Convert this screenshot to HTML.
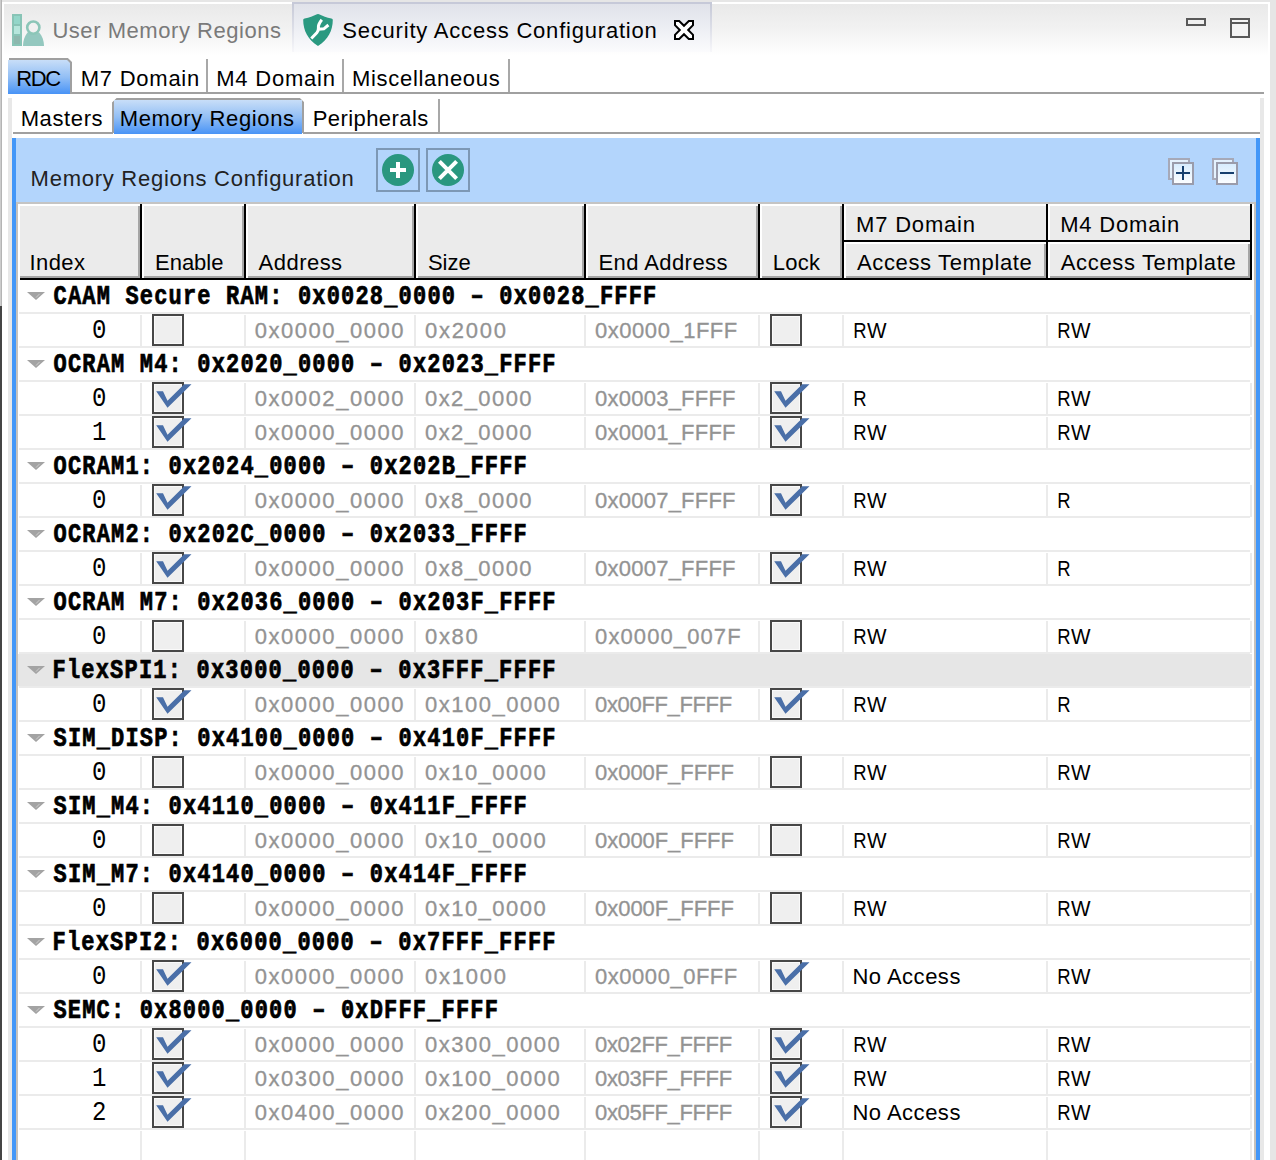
<!DOCTYPE html><html><head><meta charset="utf-8"><style>
html,body{margin:0;padding:0;width:1276px;height:1160px;overflow:hidden;background:#fff}
body>div,body>svg{position:absolute}
</style></head><body>
<div style="left:0px;top:0px;width:1276px;height:2px;background:#e6e6e6"></div>
<div style="left:1270px;top:0px;width:6px;height:1160px;background:#e6e6e6"></div>
<div style="left:0px;top:0px;width:2px;height:306px;background:linear-gradient(90deg,#d8d8d8,#a8a8a8)"></div>
<div style="left:0px;top:306px;width:2px;height:854px;background:#444"></div>
<div style="left:4px;top:4px;width:1264px;height:52px;background:linear-gradient(#e9e9e9,#f2f2f2 50%,#fff)"></div>
<div style="left:292px;top:2px;width:420px;height:50px;background:linear-gradient(#dfe1e9,#eceef3 50%,#fbfbfd)"></div>
<div style="left:292px;top:2px;width:420px;height:2px;background:#c6c9d8"></div>
<div style="left:292px;top:4px;width:2px;height:48px;background:linear-gradient(#c6c9d7,#dcdee7 50%,#f7f7fa)"></div>
<div style="left:710px;top:4px;width:2px;height:48px;background:linear-gradient(#c6c9d7,#dcdee7 50%,#f7f7fa)"></div>
<svg style="left:0;top:0" width="60" height="56"><rect x="12" y="14" width="10" height="32" fill="#88c4b6"/><rect x="14" y="16" width="6" height="8" fill="#93d6c9"/><rect x="14" y="26" width="6" height="8" fill="#b6e6dc"/><rect x="14" y="36" width="6" height="8" fill="#8db8ae"/><path d="M27.5 32.4 C24.5 36 23 41 23 46 H44 C44 41 42.5 36 39.2 32.4 Z" fill="#94c8bf"/><circle cx="33.3" cy="27.6" r="6.1" fill="#f1f1f1" stroke="#8cc6b8" stroke-width="2.6"/></svg>
<svg style="left:296px;top:8px" width="44" height="44"><path d="M7.2 11.8 Q7.3 10.6 8.6 10.4 C13.5 9.6 17 8 21 6.2 Q22 5.7 23 6.2 C27 8 30.5 9.6 35.4 10.4 Q36.7 10.6 36.8 11.8 C36.8 22.5 32 32 22 37.9 C12 32 7.2 22.5 7.2 11.8 Z" fill="#2a9980"/><path d="M15.3 30.5 L20.8 24.8 Q22.6 22.8 22.4 20 Q22 16.5 25.8 11.8 M22.5 21.3 L27.8 20.8 L32.4 17" fill="none" stroke="#fff" stroke-width="3"/></svg>
<svg style="left:668px;top:14px" width="32" height="32"><path d="M7 7 H11.2 L16 11.8 L20.8 7 H25 V11.2 L20.2 16 L25 20.8 V25 H20.8 L16 20.2 L11.2 25 H7 V20.8 L11.8 16 L7 11.2 Z" fill="#fff" stroke="#000" stroke-width="2" stroke-linejoin="miter"/></svg>
<div style="left:1186px;top:18px;width:20px;height:8px;border:2px solid #595959;box-sizing:border-box;background:#f0f0f0"></div>
<div style="left:1230px;top:18px;width:20px;height:20px;border:2px solid #595959;box-sizing:border-box;background:#f4f4f4"></div>
<div style="left:1232px;top:22px;width:16px;height:2px;background:#595959"></div>
<div style="left:8px;top:60px;width:62px;height:34px;background:linear-gradient(#c8def8,#93bff5 50%,#4893f6)"></div>
<svg style="left:0;top:0" width="1276" height="140"><path d="M9 59 H67.5 L71 62.5 V93" fill="none" stroke="#a0a0a0" stroke-width="2"/><path d="M113 133 V103 L117 99 H299.5 L303 102.5 V133" fill="none" stroke="#a0a0a0" stroke-width="2"/></svg>
<div style="left:70px;top:92px;width:1194px;height:2px;background:#a0a0a0"></div>
<div style="left:206px;top:59px;width:2px;height:33px;background:#a8a8a8"></div>
<div style="left:342px;top:59px;width:2px;height:33px;background:#a8a8a8"></div>
<div style="left:508px;top:59px;width:2px;height:33px;background:#a8a8a8"></div>
<div style="left:8px;top:98px;width:4px;height:1062px;background:#e8e8e8"></div>
<div style="left:1260px;top:98px;width:4px;height:1062px;background:#e8e8e8"></div>
<div style="left:114px;top:100px;width:188px;height:34px;background:linear-gradient(#c8def8,#93bff5 50%,#4893f6)"></div>
<div style="left:13px;top:132px;width:100px;height:2px;background:#a0a0a0"></div>
<div style="left:303px;top:132px;width:957px;height:2px;background:#a0a0a0"></div>
<div style="left:438px;top:99px;width:2px;height:33px;background:#a8a8a8"></div>
<div style="left:12px;top:138px;width:1248px;height:1022px;background:#b3d5fc"></div>
<div style="left:12px;top:138px;width:4px;height:1022px;background:#4397f8"></div>
<div style="left:1256px;top:138px;width:4px;height:1022px;background:#4397f8"></div>
<svg style="left:376px;top:148px" width="44" height="44"><rect x="1" y="1" width="42" height="42" fill="none" stroke="#7d98b5" stroke-width="2"/><circle cx="22" cy="22" r="16" fill="#2a977f"/><rect x="14" y="20" width="16" height="4" fill="#fff"/><rect x="20" y="14" width="4" height="16" fill="#fff"/></svg>
<svg style="left:426px;top:148px" width="44" height="44"><rect x="1" y="1" width="42" height="42" fill="none" stroke="#7d98b5" stroke-width="2"/><circle cx="22" cy="22" r="16" fill="#2a977f"/><path d="M13.4 13.4 L30.6 30.6 M30.6 13.4 L13.4 30.6" stroke="#fff" stroke-width="4"/></svg>
<svg style="left:1168px;top:157px" width="28" height="28"><rect x="1" y="2" width="20" height="20" fill="#e4f2fe" stroke="#a6a9b8" stroke-width="2"/><defs><linearGradient id="g+" x1="0" y1="0" x2="0" y2="1"><stop offset="0" stop-color="#d6ecfe"/><stop offset="1" stop-color="#fdfeff"/></linearGradient></defs><rect x="5" y="6" width="20" height="21" fill="url(#g+)" stroke="#9a9cab" stroke-width="2"/><path d="M8 16 H22 M15 9 V23" stroke="#163f6e" stroke-width="2"/></svg>
<svg style="left:1212px;top:157px" width="28" height="28"><rect x="1" y="2" width="20" height="20" fill="#e4f2fe" stroke="#a6a9b8" stroke-width="2"/><defs><linearGradient id="g-" x1="0" y1="0" x2="0" y2="1"><stop offset="0" stop-color="#d6ecfe"/><stop offset="1" stop-color="#fdfeff"/></linearGradient></defs><rect x="5" y="6" width="20" height="21" fill="url(#g-)" stroke="#9a9cab" stroke-width="2"/><path d="M8 16 H22" stroke="#163f6e" stroke-width="2"/></svg>
<div style="left:16px;top:202px;width:1240px;height:958px;background:#fff"></div>
<div style="left:16px;top:202px;width:1240px;height:2px;background:#c4c4c4"></div>
<div style="left:16px;top:202px;width:2px;height:958px;background:#c6c2bd"></div>
<div style="left:1254px;top:202px;width:2px;height:958px;background:#c6c2bd"></div>
<div style="left:18px;top:204px;width:124px;height:76px;background:#000"></div>
<div style="left:18px;top:204px;width:122px;height:74px;background:#fff"></div>
<div style="left:20px;top:206px;width:120px;height:72px;background:#a5a5a5"></div>
<div style="left:20px;top:206px;width:118px;height:70px;background:#ebebeb"></div>
<div style="left:142px;top:204px;width:104px;height:76px;background:#000"></div>
<div style="left:142px;top:204px;width:102px;height:74px;background:#fff"></div>
<div style="left:144px;top:206px;width:100px;height:72px;background:#a5a5a5"></div>
<div style="left:144px;top:206px;width:98px;height:70px;background:#ebebeb"></div>
<div style="left:246px;top:204px;width:170px;height:76px;background:#000"></div>
<div style="left:246px;top:204px;width:168px;height:74px;background:#fff"></div>
<div style="left:248px;top:206px;width:166px;height:72px;background:#a5a5a5"></div>
<div style="left:248px;top:206px;width:164px;height:70px;background:#ebebeb"></div>
<div style="left:416px;top:204px;width:170px;height:76px;background:#000"></div>
<div style="left:416px;top:204px;width:168px;height:74px;background:#fff"></div>
<div style="left:418px;top:206px;width:166px;height:72px;background:#a5a5a5"></div>
<div style="left:418px;top:206px;width:164px;height:70px;background:#ebebeb"></div>
<div style="left:586px;top:204px;width:174px;height:76px;background:#000"></div>
<div style="left:586px;top:204px;width:172px;height:74px;background:#fff"></div>
<div style="left:588px;top:206px;width:170px;height:72px;background:#a5a5a5"></div>
<div style="left:588px;top:206px;width:168px;height:70px;background:#ebebeb"></div>
<div style="left:760px;top:204px;width:84px;height:76px;background:#000"></div>
<div style="left:760px;top:204px;width:82px;height:74px;background:#fff"></div>
<div style="left:762px;top:206px;width:80px;height:72px;background:#a5a5a5"></div>
<div style="left:762px;top:206px;width:78px;height:70px;background:#ebebeb"></div>
<div style="left:18px;top:204px;width:2px;height:76px;background:#fff"></div>
<div style="left:844px;top:204px;width:204px;height:38px;background:#000"></div>
<div style="left:844px;top:204px;width:202px;height:36px;background:#fff"></div>
<div style="left:846px;top:206px;width:200px;height:34px;background:#ebebeb"></div>
<div style="left:844px;top:242px;width:204px;height:38px;background:#000"></div>
<div style="left:844px;top:242px;width:202px;height:36px;background:#fff"></div>
<div style="left:846px;top:244px;width:200px;height:34px;background:#a5a5a5"></div>
<div style="left:846px;top:244px;width:198px;height:32px;background:#ebebeb"></div>
<div style="left:1048px;top:204px;width:204px;height:38px;background:#000"></div>
<div style="left:1048px;top:204px;width:202px;height:36px;background:#fff"></div>
<div style="left:1050px;top:206px;width:200px;height:34px;background:#ebebeb"></div>
<div style="left:1048px;top:242px;width:204px;height:38px;background:#000"></div>
<div style="left:1048px;top:242px;width:202px;height:36px;background:#fff"></div>
<div style="left:1050px;top:244px;width:200px;height:34px;background:#a5a5a5"></div>
<div style="left:1050px;top:244px;width:198px;height:32px;background:#ebebeb"></div>
<svg style="left:27px;top:292px" width="18" height="8"><path d="M0 0 H18 L9 8 Z" fill="#a3a3a3"/><path d="M9 5.6 L12.6 1.9" stroke="#d8d8d8" stroke-width="0.8"/></svg>
<div style="left:19px;top:312px;width:1231px;height:2px;background:#ebebeb"></div>
<div style="left:140px;top:315px;width:2px;height:32px;background:#ebebeb"></div>
<div style="left:244px;top:315px;width:2px;height:32px;background:#ebebeb"></div>
<div style="left:414px;top:315px;width:2px;height:32px;background:#ebebeb"></div>
<div style="left:584px;top:315px;width:2px;height:32px;background:#ebebeb"></div>
<div style="left:758px;top:315px;width:2px;height:32px;background:#ebebeb"></div>
<div style="left:842px;top:315px;width:2px;height:32px;background:#ebebeb"></div>
<div style="left:1046px;top:315px;width:2px;height:32px;background:#ebebeb"></div>
<div style="left:1250px;top:315px;width:2px;height:32px;background:#ebebeb"></div>
<svg style="left:152px;top:314px" width="40" height="32"><rect x="1" y="1" width="30" height="30" fill="#efefef" stroke="#474747" stroke-width="2"/><rect x="2.5" y="2.5" width="27" height="27" fill="none" stroke="#fafafa" stroke-width="1"/></svg>
<svg style="left:770px;top:314px" width="40" height="32"><rect x="1" y="1" width="30" height="30" fill="#efefef" stroke="#474747" stroke-width="2"/><rect x="2.5" y="2.5" width="27" height="27" fill="none" stroke="#fafafa" stroke-width="1"/></svg>
<div style="left:19px;top:346px;width:1231px;height:2px;background:#ebebeb"></div>
<svg style="left:27px;top:360px" width="18" height="8"><path d="M0 0 H18 L9 8 Z" fill="#a3a3a3"/><path d="M9 5.6 L12.6 1.9" stroke="#d8d8d8" stroke-width="0.8"/></svg>
<div style="left:19px;top:380px;width:1231px;height:2px;background:#ebebeb"></div>
<div style="left:140px;top:383px;width:2px;height:32px;background:#ebebeb"></div>
<div style="left:244px;top:383px;width:2px;height:32px;background:#ebebeb"></div>
<div style="left:414px;top:383px;width:2px;height:32px;background:#ebebeb"></div>
<div style="left:584px;top:383px;width:2px;height:32px;background:#ebebeb"></div>
<div style="left:758px;top:383px;width:2px;height:32px;background:#ebebeb"></div>
<div style="left:842px;top:383px;width:2px;height:32px;background:#ebebeb"></div>
<div style="left:1046px;top:383px;width:2px;height:32px;background:#ebebeb"></div>
<div style="left:1250px;top:383px;width:2px;height:32px;background:#ebebeb"></div>
<svg style="left:152px;top:382px" width="40" height="32"><rect x="1" y="1" width="30" height="30" fill="#efefef" stroke="#474747" stroke-width="2"/><rect x="2.5" y="2.5" width="27" height="27" fill="none" stroke="#fafafa" stroke-width="1"/><path d="M4.2 9.3 H11 L15.5 18.7 L32.2 2.2 H39.5 L15.5 25.8 Z" fill="#4a6fa8"/></svg>
<svg style="left:770px;top:382px" width="40" height="32"><rect x="1" y="1" width="30" height="30" fill="#efefef" stroke="#474747" stroke-width="2"/><rect x="2.5" y="2.5" width="27" height="27" fill="none" stroke="#fafafa" stroke-width="1"/><path d="M4.2 9.3 H11 L15.5 18.7 L32.2 2.2 H39.5 L15.5 25.8 Z" fill="#4a6fa8"/></svg>
<div style="left:19px;top:414px;width:1231px;height:2px;background:#ebebeb"></div>
<div style="left:140px;top:417px;width:2px;height:32px;background:#ebebeb"></div>
<div style="left:244px;top:417px;width:2px;height:32px;background:#ebebeb"></div>
<div style="left:414px;top:417px;width:2px;height:32px;background:#ebebeb"></div>
<div style="left:584px;top:417px;width:2px;height:32px;background:#ebebeb"></div>
<div style="left:758px;top:417px;width:2px;height:32px;background:#ebebeb"></div>
<div style="left:842px;top:417px;width:2px;height:32px;background:#ebebeb"></div>
<div style="left:1046px;top:417px;width:2px;height:32px;background:#ebebeb"></div>
<div style="left:1250px;top:417px;width:2px;height:32px;background:#ebebeb"></div>
<svg style="left:152px;top:416px" width="40" height="32"><rect x="1" y="1" width="30" height="30" fill="#efefef" stroke="#474747" stroke-width="2"/><rect x="2.5" y="2.5" width="27" height="27" fill="none" stroke="#fafafa" stroke-width="1"/><path d="M4.2 9.3 H11 L15.5 18.7 L32.2 2.2 H39.5 L15.5 25.8 Z" fill="#4a6fa8"/></svg>
<svg style="left:770px;top:416px" width="40" height="32"><rect x="1" y="1" width="30" height="30" fill="#efefef" stroke="#474747" stroke-width="2"/><rect x="2.5" y="2.5" width="27" height="27" fill="none" stroke="#fafafa" stroke-width="1"/><path d="M4.2 9.3 H11 L15.5 18.7 L32.2 2.2 H39.5 L15.5 25.8 Z" fill="#4a6fa8"/></svg>
<div style="left:19px;top:448px;width:1231px;height:2px;background:#ebebeb"></div>
<svg style="left:27px;top:462px" width="18" height="8"><path d="M0 0 H18 L9 8 Z" fill="#a3a3a3"/><path d="M9 5.6 L12.6 1.9" stroke="#d8d8d8" stroke-width="0.8"/></svg>
<div style="left:19px;top:482px;width:1231px;height:2px;background:#ebebeb"></div>
<div style="left:140px;top:485px;width:2px;height:32px;background:#ebebeb"></div>
<div style="left:244px;top:485px;width:2px;height:32px;background:#ebebeb"></div>
<div style="left:414px;top:485px;width:2px;height:32px;background:#ebebeb"></div>
<div style="left:584px;top:485px;width:2px;height:32px;background:#ebebeb"></div>
<div style="left:758px;top:485px;width:2px;height:32px;background:#ebebeb"></div>
<div style="left:842px;top:485px;width:2px;height:32px;background:#ebebeb"></div>
<div style="left:1046px;top:485px;width:2px;height:32px;background:#ebebeb"></div>
<div style="left:1250px;top:485px;width:2px;height:32px;background:#ebebeb"></div>
<svg style="left:152px;top:484px" width="40" height="32"><rect x="1" y="1" width="30" height="30" fill="#efefef" stroke="#474747" stroke-width="2"/><rect x="2.5" y="2.5" width="27" height="27" fill="none" stroke="#fafafa" stroke-width="1"/><path d="M4.2 9.3 H11 L15.5 18.7 L32.2 2.2 H39.5 L15.5 25.8 Z" fill="#4a6fa8"/></svg>
<svg style="left:770px;top:484px" width="40" height="32"><rect x="1" y="1" width="30" height="30" fill="#efefef" stroke="#474747" stroke-width="2"/><rect x="2.5" y="2.5" width="27" height="27" fill="none" stroke="#fafafa" stroke-width="1"/><path d="M4.2 9.3 H11 L15.5 18.7 L32.2 2.2 H39.5 L15.5 25.8 Z" fill="#4a6fa8"/></svg>
<div style="left:19px;top:516px;width:1231px;height:2px;background:#ebebeb"></div>
<svg style="left:27px;top:530px" width="18" height="8"><path d="M0 0 H18 L9 8 Z" fill="#a3a3a3"/><path d="M9 5.6 L12.6 1.9" stroke="#d8d8d8" stroke-width="0.8"/></svg>
<div style="left:19px;top:550px;width:1231px;height:2px;background:#ebebeb"></div>
<div style="left:140px;top:553px;width:2px;height:32px;background:#ebebeb"></div>
<div style="left:244px;top:553px;width:2px;height:32px;background:#ebebeb"></div>
<div style="left:414px;top:553px;width:2px;height:32px;background:#ebebeb"></div>
<div style="left:584px;top:553px;width:2px;height:32px;background:#ebebeb"></div>
<div style="left:758px;top:553px;width:2px;height:32px;background:#ebebeb"></div>
<div style="left:842px;top:553px;width:2px;height:32px;background:#ebebeb"></div>
<div style="left:1046px;top:553px;width:2px;height:32px;background:#ebebeb"></div>
<div style="left:1250px;top:553px;width:2px;height:32px;background:#ebebeb"></div>
<svg style="left:152px;top:552px" width="40" height="32"><rect x="1" y="1" width="30" height="30" fill="#efefef" stroke="#474747" stroke-width="2"/><rect x="2.5" y="2.5" width="27" height="27" fill="none" stroke="#fafafa" stroke-width="1"/><path d="M4.2 9.3 H11 L15.5 18.7 L32.2 2.2 H39.5 L15.5 25.8 Z" fill="#4a6fa8"/></svg>
<svg style="left:770px;top:552px" width="40" height="32"><rect x="1" y="1" width="30" height="30" fill="#efefef" stroke="#474747" stroke-width="2"/><rect x="2.5" y="2.5" width="27" height="27" fill="none" stroke="#fafafa" stroke-width="1"/><path d="M4.2 9.3 H11 L15.5 18.7 L32.2 2.2 H39.5 L15.5 25.8 Z" fill="#4a6fa8"/></svg>
<div style="left:19px;top:584px;width:1231px;height:2px;background:#ebebeb"></div>
<svg style="left:27px;top:598px" width="18" height="8"><path d="M0 0 H18 L9 8 Z" fill="#a3a3a3"/><path d="M9 5.6 L12.6 1.9" stroke="#d8d8d8" stroke-width="0.8"/></svg>
<div style="left:19px;top:618px;width:1231px;height:2px;background:#ebebeb"></div>
<div style="left:140px;top:621px;width:2px;height:32px;background:#ebebeb"></div>
<div style="left:244px;top:621px;width:2px;height:32px;background:#ebebeb"></div>
<div style="left:414px;top:621px;width:2px;height:32px;background:#ebebeb"></div>
<div style="left:584px;top:621px;width:2px;height:32px;background:#ebebeb"></div>
<div style="left:758px;top:621px;width:2px;height:32px;background:#ebebeb"></div>
<div style="left:842px;top:621px;width:2px;height:32px;background:#ebebeb"></div>
<div style="left:1046px;top:621px;width:2px;height:32px;background:#ebebeb"></div>
<div style="left:1250px;top:621px;width:2px;height:32px;background:#ebebeb"></div>
<svg style="left:152px;top:620px" width="40" height="32"><rect x="1" y="1" width="30" height="30" fill="#efefef" stroke="#474747" stroke-width="2"/><rect x="2.5" y="2.5" width="27" height="27" fill="none" stroke="#fafafa" stroke-width="1"/></svg>
<svg style="left:770px;top:620px" width="40" height="32"><rect x="1" y="1" width="30" height="30" fill="#efefef" stroke="#474747" stroke-width="2"/><rect x="2.5" y="2.5" width="27" height="27" fill="none" stroke="#fafafa" stroke-width="1"/></svg>
<div style="left:19px;top:652px;width:1231px;height:2px;background:#ebebeb"></div>
<div style="left:18px;top:654px;width:1234px;height:32px;background:#e6e6e6"></div>
<svg style="left:27px;top:666px" width="18" height="8"><path d="M0 0 H18 L9 8 Z" fill="#a3a3a3"/><path d="M9 5.6 L12.6 1.9" stroke="#d8d8d8" stroke-width="0.8"/></svg>
<div style="left:19px;top:686px;width:1231px;height:2px;background:#ebebeb"></div>
<div style="left:140px;top:689px;width:2px;height:32px;background:#ebebeb"></div>
<div style="left:244px;top:689px;width:2px;height:32px;background:#ebebeb"></div>
<div style="left:414px;top:689px;width:2px;height:32px;background:#ebebeb"></div>
<div style="left:584px;top:689px;width:2px;height:32px;background:#ebebeb"></div>
<div style="left:758px;top:689px;width:2px;height:32px;background:#ebebeb"></div>
<div style="left:842px;top:689px;width:2px;height:32px;background:#ebebeb"></div>
<div style="left:1046px;top:689px;width:2px;height:32px;background:#ebebeb"></div>
<div style="left:1250px;top:689px;width:2px;height:32px;background:#ebebeb"></div>
<svg style="left:152px;top:688px" width="40" height="32"><rect x="1" y="1" width="30" height="30" fill="#efefef" stroke="#474747" stroke-width="2"/><rect x="2.5" y="2.5" width="27" height="27" fill="none" stroke="#fafafa" stroke-width="1"/><path d="M4.2 9.3 H11 L15.5 18.7 L32.2 2.2 H39.5 L15.5 25.8 Z" fill="#4a6fa8"/></svg>
<svg style="left:770px;top:688px" width="40" height="32"><rect x="1" y="1" width="30" height="30" fill="#efefef" stroke="#474747" stroke-width="2"/><rect x="2.5" y="2.5" width="27" height="27" fill="none" stroke="#fafafa" stroke-width="1"/><path d="M4.2 9.3 H11 L15.5 18.7 L32.2 2.2 H39.5 L15.5 25.8 Z" fill="#4a6fa8"/></svg>
<div style="left:19px;top:720px;width:1231px;height:2px;background:#ebebeb"></div>
<svg style="left:27px;top:734px" width="18" height="8"><path d="M0 0 H18 L9 8 Z" fill="#a3a3a3"/><path d="M9 5.6 L12.6 1.9" stroke="#d8d8d8" stroke-width="0.8"/></svg>
<div style="left:19px;top:754px;width:1231px;height:2px;background:#ebebeb"></div>
<div style="left:140px;top:757px;width:2px;height:32px;background:#ebebeb"></div>
<div style="left:244px;top:757px;width:2px;height:32px;background:#ebebeb"></div>
<div style="left:414px;top:757px;width:2px;height:32px;background:#ebebeb"></div>
<div style="left:584px;top:757px;width:2px;height:32px;background:#ebebeb"></div>
<div style="left:758px;top:757px;width:2px;height:32px;background:#ebebeb"></div>
<div style="left:842px;top:757px;width:2px;height:32px;background:#ebebeb"></div>
<div style="left:1046px;top:757px;width:2px;height:32px;background:#ebebeb"></div>
<div style="left:1250px;top:757px;width:2px;height:32px;background:#ebebeb"></div>
<svg style="left:152px;top:756px" width="40" height="32"><rect x="1" y="1" width="30" height="30" fill="#efefef" stroke="#474747" stroke-width="2"/><rect x="2.5" y="2.5" width="27" height="27" fill="none" stroke="#fafafa" stroke-width="1"/></svg>
<svg style="left:770px;top:756px" width="40" height="32"><rect x="1" y="1" width="30" height="30" fill="#efefef" stroke="#474747" stroke-width="2"/><rect x="2.5" y="2.5" width="27" height="27" fill="none" stroke="#fafafa" stroke-width="1"/></svg>
<div style="left:19px;top:788px;width:1231px;height:2px;background:#ebebeb"></div>
<svg style="left:27px;top:802px" width="18" height="8"><path d="M0 0 H18 L9 8 Z" fill="#a3a3a3"/><path d="M9 5.6 L12.6 1.9" stroke="#d8d8d8" stroke-width="0.8"/></svg>
<div style="left:19px;top:822px;width:1231px;height:2px;background:#ebebeb"></div>
<div style="left:140px;top:825px;width:2px;height:32px;background:#ebebeb"></div>
<div style="left:244px;top:825px;width:2px;height:32px;background:#ebebeb"></div>
<div style="left:414px;top:825px;width:2px;height:32px;background:#ebebeb"></div>
<div style="left:584px;top:825px;width:2px;height:32px;background:#ebebeb"></div>
<div style="left:758px;top:825px;width:2px;height:32px;background:#ebebeb"></div>
<div style="left:842px;top:825px;width:2px;height:32px;background:#ebebeb"></div>
<div style="left:1046px;top:825px;width:2px;height:32px;background:#ebebeb"></div>
<div style="left:1250px;top:825px;width:2px;height:32px;background:#ebebeb"></div>
<svg style="left:152px;top:824px" width="40" height="32"><rect x="1" y="1" width="30" height="30" fill="#efefef" stroke="#474747" stroke-width="2"/><rect x="2.5" y="2.5" width="27" height="27" fill="none" stroke="#fafafa" stroke-width="1"/></svg>
<svg style="left:770px;top:824px" width="40" height="32"><rect x="1" y="1" width="30" height="30" fill="#efefef" stroke="#474747" stroke-width="2"/><rect x="2.5" y="2.5" width="27" height="27" fill="none" stroke="#fafafa" stroke-width="1"/></svg>
<div style="left:19px;top:856px;width:1231px;height:2px;background:#ebebeb"></div>
<svg style="left:27px;top:870px" width="18" height="8"><path d="M0 0 H18 L9 8 Z" fill="#a3a3a3"/><path d="M9 5.6 L12.6 1.9" stroke="#d8d8d8" stroke-width="0.8"/></svg>
<div style="left:19px;top:890px;width:1231px;height:2px;background:#ebebeb"></div>
<div style="left:140px;top:893px;width:2px;height:32px;background:#ebebeb"></div>
<div style="left:244px;top:893px;width:2px;height:32px;background:#ebebeb"></div>
<div style="left:414px;top:893px;width:2px;height:32px;background:#ebebeb"></div>
<div style="left:584px;top:893px;width:2px;height:32px;background:#ebebeb"></div>
<div style="left:758px;top:893px;width:2px;height:32px;background:#ebebeb"></div>
<div style="left:842px;top:893px;width:2px;height:32px;background:#ebebeb"></div>
<div style="left:1046px;top:893px;width:2px;height:32px;background:#ebebeb"></div>
<div style="left:1250px;top:893px;width:2px;height:32px;background:#ebebeb"></div>
<svg style="left:152px;top:892px" width="40" height="32"><rect x="1" y="1" width="30" height="30" fill="#efefef" stroke="#474747" stroke-width="2"/><rect x="2.5" y="2.5" width="27" height="27" fill="none" stroke="#fafafa" stroke-width="1"/></svg>
<svg style="left:770px;top:892px" width="40" height="32"><rect x="1" y="1" width="30" height="30" fill="#efefef" stroke="#474747" stroke-width="2"/><rect x="2.5" y="2.5" width="27" height="27" fill="none" stroke="#fafafa" stroke-width="1"/></svg>
<div style="left:19px;top:924px;width:1231px;height:2px;background:#ebebeb"></div>
<svg style="left:27px;top:938px" width="18" height="8"><path d="M0 0 H18 L9 8 Z" fill="#a3a3a3"/><path d="M9 5.6 L12.6 1.9" stroke="#d8d8d8" stroke-width="0.8"/></svg>
<div style="left:19px;top:958px;width:1231px;height:2px;background:#ebebeb"></div>
<div style="left:140px;top:961px;width:2px;height:32px;background:#ebebeb"></div>
<div style="left:244px;top:961px;width:2px;height:32px;background:#ebebeb"></div>
<div style="left:414px;top:961px;width:2px;height:32px;background:#ebebeb"></div>
<div style="left:584px;top:961px;width:2px;height:32px;background:#ebebeb"></div>
<div style="left:758px;top:961px;width:2px;height:32px;background:#ebebeb"></div>
<div style="left:842px;top:961px;width:2px;height:32px;background:#ebebeb"></div>
<div style="left:1046px;top:961px;width:2px;height:32px;background:#ebebeb"></div>
<div style="left:1250px;top:961px;width:2px;height:32px;background:#ebebeb"></div>
<svg style="left:152px;top:960px" width="40" height="32"><rect x="1" y="1" width="30" height="30" fill="#efefef" stroke="#474747" stroke-width="2"/><rect x="2.5" y="2.5" width="27" height="27" fill="none" stroke="#fafafa" stroke-width="1"/><path d="M4.2 9.3 H11 L15.5 18.7 L32.2 2.2 H39.5 L15.5 25.8 Z" fill="#4a6fa8"/></svg>
<svg style="left:770px;top:960px" width="40" height="32"><rect x="1" y="1" width="30" height="30" fill="#efefef" stroke="#474747" stroke-width="2"/><rect x="2.5" y="2.5" width="27" height="27" fill="none" stroke="#fafafa" stroke-width="1"/><path d="M4.2 9.3 H11 L15.5 18.7 L32.2 2.2 H39.5 L15.5 25.8 Z" fill="#4a6fa8"/></svg>
<div style="left:19px;top:992px;width:1231px;height:2px;background:#ebebeb"></div>
<svg style="left:27px;top:1006px" width="18" height="8"><path d="M0 0 H18 L9 8 Z" fill="#a3a3a3"/><path d="M9 5.6 L12.6 1.9" stroke="#d8d8d8" stroke-width="0.8"/></svg>
<div style="left:19px;top:1026px;width:1231px;height:2px;background:#ebebeb"></div>
<div style="left:140px;top:1029px;width:2px;height:32px;background:#ebebeb"></div>
<div style="left:244px;top:1029px;width:2px;height:32px;background:#ebebeb"></div>
<div style="left:414px;top:1029px;width:2px;height:32px;background:#ebebeb"></div>
<div style="left:584px;top:1029px;width:2px;height:32px;background:#ebebeb"></div>
<div style="left:758px;top:1029px;width:2px;height:32px;background:#ebebeb"></div>
<div style="left:842px;top:1029px;width:2px;height:32px;background:#ebebeb"></div>
<div style="left:1046px;top:1029px;width:2px;height:32px;background:#ebebeb"></div>
<div style="left:1250px;top:1029px;width:2px;height:32px;background:#ebebeb"></div>
<svg style="left:152px;top:1028px" width="40" height="32"><rect x="1" y="1" width="30" height="30" fill="#efefef" stroke="#474747" stroke-width="2"/><rect x="2.5" y="2.5" width="27" height="27" fill="none" stroke="#fafafa" stroke-width="1"/><path d="M4.2 9.3 H11 L15.5 18.7 L32.2 2.2 H39.5 L15.5 25.8 Z" fill="#4a6fa8"/></svg>
<svg style="left:770px;top:1028px" width="40" height="32"><rect x="1" y="1" width="30" height="30" fill="#efefef" stroke="#474747" stroke-width="2"/><rect x="2.5" y="2.5" width="27" height="27" fill="none" stroke="#fafafa" stroke-width="1"/><path d="M4.2 9.3 H11 L15.5 18.7 L32.2 2.2 H39.5 L15.5 25.8 Z" fill="#4a6fa8"/></svg>
<div style="left:19px;top:1060px;width:1231px;height:2px;background:#ebebeb"></div>
<div style="left:140px;top:1063px;width:2px;height:32px;background:#ebebeb"></div>
<div style="left:244px;top:1063px;width:2px;height:32px;background:#ebebeb"></div>
<div style="left:414px;top:1063px;width:2px;height:32px;background:#ebebeb"></div>
<div style="left:584px;top:1063px;width:2px;height:32px;background:#ebebeb"></div>
<div style="left:758px;top:1063px;width:2px;height:32px;background:#ebebeb"></div>
<div style="left:842px;top:1063px;width:2px;height:32px;background:#ebebeb"></div>
<div style="left:1046px;top:1063px;width:2px;height:32px;background:#ebebeb"></div>
<div style="left:1250px;top:1063px;width:2px;height:32px;background:#ebebeb"></div>
<svg style="left:152px;top:1062px" width="40" height="32"><rect x="1" y="1" width="30" height="30" fill="#efefef" stroke="#474747" stroke-width="2"/><rect x="2.5" y="2.5" width="27" height="27" fill="none" stroke="#fafafa" stroke-width="1"/><path d="M4.2 9.3 H11 L15.5 18.7 L32.2 2.2 H39.5 L15.5 25.8 Z" fill="#4a6fa8"/></svg>
<svg style="left:770px;top:1062px" width="40" height="32"><rect x="1" y="1" width="30" height="30" fill="#efefef" stroke="#474747" stroke-width="2"/><rect x="2.5" y="2.5" width="27" height="27" fill="none" stroke="#fafafa" stroke-width="1"/><path d="M4.2 9.3 H11 L15.5 18.7 L32.2 2.2 H39.5 L15.5 25.8 Z" fill="#4a6fa8"/></svg>
<div style="left:19px;top:1094px;width:1231px;height:2px;background:#ebebeb"></div>
<div style="left:140px;top:1097px;width:2px;height:32px;background:#ebebeb"></div>
<div style="left:244px;top:1097px;width:2px;height:32px;background:#ebebeb"></div>
<div style="left:414px;top:1097px;width:2px;height:32px;background:#ebebeb"></div>
<div style="left:584px;top:1097px;width:2px;height:32px;background:#ebebeb"></div>
<div style="left:758px;top:1097px;width:2px;height:32px;background:#ebebeb"></div>
<div style="left:842px;top:1097px;width:2px;height:32px;background:#ebebeb"></div>
<div style="left:1046px;top:1097px;width:2px;height:32px;background:#ebebeb"></div>
<div style="left:1250px;top:1097px;width:2px;height:32px;background:#ebebeb"></div>
<svg style="left:152px;top:1096px" width="40" height="32"><rect x="1" y="1" width="30" height="30" fill="#efefef" stroke="#474747" stroke-width="2"/><rect x="2.5" y="2.5" width="27" height="27" fill="none" stroke="#fafafa" stroke-width="1"/><path d="M4.2 9.3 H11 L15.5 18.7 L32.2 2.2 H39.5 L15.5 25.8 Z" fill="#4a6fa8"/></svg>
<svg style="left:770px;top:1096px" width="40" height="32"><rect x="1" y="1" width="30" height="30" fill="#efefef" stroke="#474747" stroke-width="2"/><rect x="2.5" y="2.5" width="27" height="27" fill="none" stroke="#fafafa" stroke-width="1"/><path d="M4.2 9.3 H11 L15.5 18.7 L32.2 2.2 H39.5 L15.5 25.8 Z" fill="#4a6fa8"/></svg>
<div style="left:19px;top:1128px;width:1231px;height:2px;background:#ebebeb"></div>
<div style="left:140px;top:1131px;width:2px;height:32px;background:#ebebeb"></div>
<div style="left:244px;top:1131px;width:2px;height:32px;background:#ebebeb"></div>
<div style="left:414px;top:1131px;width:2px;height:32px;background:#ebebeb"></div>
<div style="left:584px;top:1131px;width:2px;height:32px;background:#ebebeb"></div>
<div style="left:758px;top:1131px;width:2px;height:32px;background:#ebebeb"></div>
<div style="left:842px;top:1131px;width:2px;height:32px;background:#ebebeb"></div>
<div style="left:1046px;top:1131px;width:2px;height:32px;background:#ebebeb"></div>
<div style="left:1250px;top:1131px;width:2px;height:32px;background:#ebebeb"></div>
<div style='left:53.50px;top:299px;font:bold 22px "Liberation Mono", monospace;color:#000;line-height:0;white-space:pre;letter-spacing:1.178px;-webkit-text-stroke:0.6px #000;transform:scale(1.0,1.24);transform-origin:0.00px 4px'>CAAM Secure RAM: 0x0028_0000 – 0x0028_FFFF</div>
<div style='left:92.00px;top:332px;font:normal 24px "Liberation Mono", monospace;color:#000;line-height:0;white-space:pre;transform:scale(1.0,1.15);transform-origin:1.00px 5px'>0</div>
<div style='left:254.70px;top:331px;font:normal 22px "Liberation Sans", sans-serif;color:#939393;line-height:0;white-space:pre;letter-spacing:1.548px;-webkit-text-stroke:0.3px #939393'>0x0000_0000</div>
<div style='left:425.00px;top:331px;font:normal 22px "Liberation Sans", sans-serif;color:#939393;line-height:0;white-space:pre;letter-spacing:1.752px;-webkit-text-stroke:0.3px #939393'>0x2000</div>
<div style='left:595.10px;top:331px;font:normal 22px "Liberation Sans", sans-serif;color:#939393;line-height:0;white-space:pre;letter-spacing:0.518px;-webkit-text-stroke:0.3px #939393'>0x0000_1FFF</div>
<div style='left:852.80px;top:331px;font:normal 22px "Liberation Sans", sans-serif;color:#000;line-height:0;white-space:pre;transform:scale(0.84,1.0);transform-origin:1.00px 7px'>R</div>
<div style='left:867.00px;top:331px;font:normal 22px "Liberation Sans", sans-serif;color:#000;line-height:0;white-space:pre;transform:scale(0.94,1.0);transform-origin:0.00px 7px'>W</div>
<div style='left:1056.60px;top:331px;font:normal 22px "Liberation Sans", sans-serif;color:#000;line-height:0;white-space:pre;transform:scale(0.84,1.0);transform-origin:1.00px 7px'>R</div>
<div style='left:1070.80px;top:331px;font:normal 22px "Liberation Sans", sans-serif;color:#000;line-height:0;white-space:pre;transform:scale(0.94,1.0);transform-origin:0.00px 7px'>W</div>
<div style='left:53.50px;top:367px;font:bold 22px "Liberation Mono", monospace;color:#000;line-height:0;white-space:pre;letter-spacing:1.174px;-webkit-text-stroke:0.6px #000;transform:scale(1.0,1.24);transform-origin:0.00px 4px'>OCRAM M4: 0x2020_0000 – 0x2023_FFFF</div>
<div style='left:92.00px;top:400px;font:normal 24px "Liberation Mono", monospace;color:#000;line-height:0;white-space:pre;transform:scale(1.0,1.15);transform-origin:1.00px 5px'>0</div>
<div style='left:254.70px;top:399px;font:normal 22px "Liberation Sans", sans-serif;color:#939393;line-height:0;white-space:pre;letter-spacing:1.548px;-webkit-text-stroke:0.3px #939393'>0x0002_0000</div>
<div style='left:425.00px;top:399px;font:normal 22px "Liberation Sans", sans-serif;color:#939393;line-height:0;white-space:pre;letter-spacing:1.413px;-webkit-text-stroke:0.3px #939393'>0x2_0000</div>
<div style='left:595.10px;top:399px;font:normal 22px "Liberation Sans", sans-serif;color:#939393;line-height:0;white-space:pre;letter-spacing:0.227px;-webkit-text-stroke:0.3px #939393'>0x0003_FFFF</div>
<div style='left:852.80px;top:399px;font:normal 22px "Liberation Sans", sans-serif;color:#000;line-height:0;white-space:pre;transform:scale(0.84,1.0);transform-origin:1.00px 7px'>R</div>
<div style='left:1056.60px;top:399px;font:normal 22px "Liberation Sans", sans-serif;color:#000;line-height:0;white-space:pre;transform:scale(0.84,1.0);transform-origin:1.00px 7px'>R</div>
<div style='left:1070.80px;top:399px;font:normal 22px "Liberation Sans", sans-serif;color:#000;line-height:0;white-space:pre;transform:scale(0.94,1.0);transform-origin:0.00px 7px'>W</div>
<div style='left:92.00px;top:434px;font:normal 24px "Liberation Mono", monospace;color:#000;line-height:0;white-space:pre;transform:scale(1.0,1.15);transform-origin:1.00px 5px'>1</div>
<div style='left:254.70px;top:433px;font:normal 22px "Liberation Sans", sans-serif;color:#939393;line-height:0;white-space:pre;letter-spacing:1.548px;-webkit-text-stroke:0.3px #939393'>0x0000_0000</div>
<div style='left:425.00px;top:433px;font:normal 22px "Liberation Sans", sans-serif;color:#939393;line-height:0;white-space:pre;letter-spacing:1.413px;-webkit-text-stroke:0.3px #939393'>0x2_0000</div>
<div style='left:595.10px;top:433px;font:normal 22px "Liberation Sans", sans-serif;color:#939393;line-height:0;white-space:pre;letter-spacing:0.227px;-webkit-text-stroke:0.3px #939393'>0x0001_FFFF</div>
<div style='left:852.80px;top:433px;font:normal 22px "Liberation Sans", sans-serif;color:#000;line-height:0;white-space:pre;transform:scale(0.84,1.0);transform-origin:1.00px 7px'>R</div>
<div style='left:867.00px;top:433px;font:normal 22px "Liberation Sans", sans-serif;color:#000;line-height:0;white-space:pre;transform:scale(0.94,1.0);transform-origin:0.00px 7px'>W</div>
<div style='left:1056.60px;top:433px;font:normal 22px "Liberation Sans", sans-serif;color:#000;line-height:0;white-space:pre;transform:scale(0.84,1.0);transform-origin:1.00px 7px'>R</div>
<div style='left:1070.80px;top:433px;font:normal 22px "Liberation Sans", sans-serif;color:#000;line-height:0;white-space:pre;transform:scale(0.94,1.0);transform-origin:0.00px 7px'>W</div>
<div style='left:53.50px;top:469px;font:bold 22px "Liberation Mono", monospace;color:#000;line-height:0;white-space:pre;letter-spacing:1.173px;-webkit-text-stroke:0.6px #000;transform:scale(1.0,1.24);transform-origin:0.00px 4px'>OCRAM1: 0x2024_0000 – 0x202B_FFFF</div>
<div style='left:92.00px;top:502px;font:normal 24px "Liberation Mono", monospace;color:#000;line-height:0;white-space:pre;transform:scale(1.0,1.15);transform-origin:1.00px 5px'>0</div>
<div style='left:254.70px;top:501px;font:normal 22px "Liberation Sans", sans-serif;color:#939393;line-height:0;white-space:pre;letter-spacing:1.548px;-webkit-text-stroke:0.3px #939393'>0x0000_0000</div>
<div style='left:425.00px;top:501px;font:normal 22px "Liberation Sans", sans-serif;color:#939393;line-height:0;white-space:pre;letter-spacing:1.413px;-webkit-text-stroke:0.3px #939393'>0x8_0000</div>
<div style='left:595.10px;top:501px;font:normal 22px "Liberation Sans", sans-serif;color:#939393;line-height:0;white-space:pre;letter-spacing:0.227px;-webkit-text-stroke:0.3px #939393'>0x0007_FFFF</div>
<div style='left:852.80px;top:501px;font:normal 22px "Liberation Sans", sans-serif;color:#000;line-height:0;white-space:pre;transform:scale(0.84,1.0);transform-origin:1.00px 7px'>R</div>
<div style='left:867.00px;top:501px;font:normal 22px "Liberation Sans", sans-serif;color:#000;line-height:0;white-space:pre;transform:scale(0.94,1.0);transform-origin:0.00px 7px'>W</div>
<div style='left:1056.60px;top:501px;font:normal 22px "Liberation Sans", sans-serif;color:#000;line-height:0;white-space:pre;transform:scale(0.84,1.0);transform-origin:1.00px 7px'>R</div>
<div style='left:53.50px;top:537px;font:bold 22px "Liberation Mono", monospace;color:#000;line-height:0;white-space:pre;letter-spacing:1.173px;-webkit-text-stroke:0.6px #000;transform:scale(1.0,1.24);transform-origin:0.00px 4px'>OCRAM2: 0x202C_0000 – 0x2033_FFFF</div>
<div style='left:92.00px;top:570px;font:normal 24px "Liberation Mono", monospace;color:#000;line-height:0;white-space:pre;transform:scale(1.0,1.15);transform-origin:1.00px 5px'>0</div>
<div style='left:254.70px;top:569px;font:normal 22px "Liberation Sans", sans-serif;color:#939393;line-height:0;white-space:pre;letter-spacing:1.548px;-webkit-text-stroke:0.3px #939393'>0x0000_0000</div>
<div style='left:425.00px;top:569px;font:normal 22px "Liberation Sans", sans-serif;color:#939393;line-height:0;white-space:pre;letter-spacing:1.413px;-webkit-text-stroke:0.3px #939393'>0x8_0000</div>
<div style='left:595.10px;top:569px;font:normal 22px "Liberation Sans", sans-serif;color:#939393;line-height:0;white-space:pre;letter-spacing:0.227px;-webkit-text-stroke:0.3px #939393'>0x0007_FFFF</div>
<div style='left:852.80px;top:569px;font:normal 22px "Liberation Sans", sans-serif;color:#000;line-height:0;white-space:pre;transform:scale(0.84,1.0);transform-origin:1.00px 7px'>R</div>
<div style='left:867.00px;top:569px;font:normal 22px "Liberation Sans", sans-serif;color:#000;line-height:0;white-space:pre;transform:scale(0.94,1.0);transform-origin:0.00px 7px'>W</div>
<div style='left:1056.60px;top:569px;font:normal 22px "Liberation Sans", sans-serif;color:#000;line-height:0;white-space:pre;transform:scale(0.84,1.0);transform-origin:1.00px 7px'>R</div>
<div style='left:53.50px;top:605px;font:bold 22px "Liberation Mono", monospace;color:#000;line-height:0;white-space:pre;letter-spacing:1.174px;-webkit-text-stroke:0.6px #000;transform:scale(1.0,1.24);transform-origin:0.00px 4px'>OCRAM M7: 0x2036_0000 – 0x203F_FFFF</div>
<div style='left:92.00px;top:638px;font:normal 24px "Liberation Mono", monospace;color:#000;line-height:0;white-space:pre;transform:scale(1.0,1.15);transform-origin:1.00px 5px'>0</div>
<div style='left:254.70px;top:637px;font:normal 22px "Liberation Sans", sans-serif;color:#939393;line-height:0;white-space:pre;letter-spacing:1.548px;-webkit-text-stroke:0.3px #939393'>0x0000_0000</div>
<div style='left:425.00px;top:637px;font:normal 22px "Liberation Sans", sans-serif;color:#939393;line-height:0;white-space:pre;letter-spacing:1.676px;-webkit-text-stroke:0.3px #939393'>0x80</div>
<div style='left:595.10px;top:637px;font:normal 22px "Liberation Sans", sans-serif;color:#939393;line-height:0;white-space:pre;letter-spacing:1.098px;-webkit-text-stroke:0.3px #939393'>0x0000_007F</div>
<div style='left:852.80px;top:637px;font:normal 22px "Liberation Sans", sans-serif;color:#000;line-height:0;white-space:pre;transform:scale(0.84,1.0);transform-origin:1.00px 7px'>R</div>
<div style='left:867.00px;top:637px;font:normal 22px "Liberation Sans", sans-serif;color:#000;line-height:0;white-space:pre;transform:scale(0.94,1.0);transform-origin:0.00px 7px'>W</div>
<div style='left:1056.60px;top:637px;font:normal 22px "Liberation Sans", sans-serif;color:#000;line-height:0;white-space:pre;transform:scale(0.84,1.0);transform-origin:1.00px 7px'>R</div>
<div style='left:1070.80px;top:637px;font:normal 22px "Liberation Sans", sans-serif;color:#000;line-height:0;white-space:pre;transform:scale(0.94,1.0);transform-origin:0.00px 7px'>W</div>
<div style='left:52.50px;top:673px;font:bold 22px "Liberation Mono", monospace;color:#000;line-height:0;white-space:pre;letter-spacing:1.204px;-webkit-text-stroke:0.6px #000;transform:scale(1.0,1.24);transform-origin:1.00px 4px'>FlexSPI1: 0x3000_0000 – 0x3FFF_FFFF</div>
<div style='left:92.00px;top:706px;font:normal 24px "Liberation Mono", monospace;color:#000;line-height:0;white-space:pre;transform:scale(1.0,1.15);transform-origin:1.00px 5px'>0</div>
<div style='left:254.70px;top:705px;font:normal 22px "Liberation Sans", sans-serif;color:#939393;line-height:0;white-space:pre;letter-spacing:1.548px;-webkit-text-stroke:0.3px #939393'>0x0000_0000</div>
<div style='left:425.00px;top:705px;font:normal 22px "Liberation Sans", sans-serif;color:#939393;line-height:0;white-space:pre;letter-spacing:1.513px;-webkit-text-stroke:0.3px #939393'>0x100_0000</div>
<div style='left:595.10px;top:705px;font:normal 22px "Liberation Sans", sans-serif;color:#939393;line-height:0;white-space:pre;letter-spacing:-0.353px;-webkit-text-stroke:0.3px #939393'>0x00FF_FFFF</div>
<div style='left:852.80px;top:705px;font:normal 22px "Liberation Sans", sans-serif;color:#000;line-height:0;white-space:pre;transform:scale(0.84,1.0);transform-origin:1.00px 7px'>R</div>
<div style='left:867.00px;top:705px;font:normal 22px "Liberation Sans", sans-serif;color:#000;line-height:0;white-space:pre;transform:scale(0.94,1.0);transform-origin:0.00px 7px'>W</div>
<div style='left:1056.60px;top:705px;font:normal 22px "Liberation Sans", sans-serif;color:#000;line-height:0;white-space:pre;transform:scale(0.84,1.0);transform-origin:1.00px 7px'>R</div>
<div style='left:53.50px;top:741px;font:bold 22px "Liberation Mono", monospace;color:#000;line-height:0;white-space:pre;letter-spacing:1.174px;-webkit-text-stroke:0.6px #000;transform:scale(1.0,1.24);transform-origin:0.00px 4px'>SIM_DISP: 0x4100_0000 – 0x410F_FFFF</div>
<div style='left:92.00px;top:774px;font:normal 24px "Liberation Mono", monospace;color:#000;line-height:0;white-space:pre;transform:scale(1.0,1.15);transform-origin:1.00px 5px'>0</div>
<div style='left:254.70px;top:773px;font:normal 22px "Liberation Sans", sans-serif;color:#939393;line-height:0;white-space:pre;letter-spacing:1.548px;-webkit-text-stroke:0.3px #939393'>0x0000_0000</div>
<div style='left:425.00px;top:773px;font:normal 22px "Liberation Sans", sans-serif;color:#939393;line-height:0;white-space:pre;letter-spacing:1.469px;-webkit-text-stroke:0.3px #939393'>0x10_0000</div>
<div style='left:595.10px;top:773px;font:normal 22px "Liberation Sans", sans-serif;color:#939393;line-height:0;white-space:pre;letter-spacing:-0.063px;-webkit-text-stroke:0.3px #939393'>0x000F_FFFF</div>
<div style='left:852.80px;top:773px;font:normal 22px "Liberation Sans", sans-serif;color:#000;line-height:0;white-space:pre;transform:scale(0.84,1.0);transform-origin:1.00px 7px'>R</div>
<div style='left:867.00px;top:773px;font:normal 22px "Liberation Sans", sans-serif;color:#000;line-height:0;white-space:pre;transform:scale(0.94,1.0);transform-origin:0.00px 7px'>W</div>
<div style='left:1056.60px;top:773px;font:normal 22px "Liberation Sans", sans-serif;color:#000;line-height:0;white-space:pre;transform:scale(0.84,1.0);transform-origin:1.00px 7px'>R</div>
<div style='left:1070.80px;top:773px;font:normal 22px "Liberation Sans", sans-serif;color:#000;line-height:0;white-space:pre;transform:scale(0.94,1.0);transform-origin:0.00px 7px'>W</div>
<div style='left:53.50px;top:809px;font:bold 22px "Liberation Mono", monospace;color:#000;line-height:0;white-space:pre;letter-spacing:1.173px;-webkit-text-stroke:0.6px #000;transform:scale(1.0,1.24);transform-origin:0.00px 4px'>SIM_M4: 0x4110_0000 – 0x411F_FFFF</div>
<div style='left:92.00px;top:842px;font:normal 24px "Liberation Mono", monospace;color:#000;line-height:0;white-space:pre;transform:scale(1.0,1.15);transform-origin:1.00px 5px'>0</div>
<div style='left:254.70px;top:841px;font:normal 22px "Liberation Sans", sans-serif;color:#939393;line-height:0;white-space:pre;letter-spacing:1.548px;-webkit-text-stroke:0.3px #939393'>0x0000_0000</div>
<div style='left:425.00px;top:841px;font:normal 22px "Liberation Sans", sans-serif;color:#939393;line-height:0;white-space:pre;letter-spacing:1.469px;-webkit-text-stroke:0.3px #939393'>0x10_0000</div>
<div style='left:595.10px;top:841px;font:normal 22px "Liberation Sans", sans-serif;color:#939393;line-height:0;white-space:pre;letter-spacing:-0.063px;-webkit-text-stroke:0.3px #939393'>0x000F_FFFF</div>
<div style='left:852.80px;top:841px;font:normal 22px "Liberation Sans", sans-serif;color:#000;line-height:0;white-space:pre;transform:scale(0.84,1.0);transform-origin:1.00px 7px'>R</div>
<div style='left:867.00px;top:841px;font:normal 22px "Liberation Sans", sans-serif;color:#000;line-height:0;white-space:pre;transform:scale(0.94,1.0);transform-origin:0.00px 7px'>W</div>
<div style='left:1056.60px;top:841px;font:normal 22px "Liberation Sans", sans-serif;color:#000;line-height:0;white-space:pre;transform:scale(0.84,1.0);transform-origin:1.00px 7px'>R</div>
<div style='left:1070.80px;top:841px;font:normal 22px "Liberation Sans", sans-serif;color:#000;line-height:0;white-space:pre;transform:scale(0.94,1.0);transform-origin:0.00px 7px'>W</div>
<div style='left:53.50px;top:877px;font:bold 22px "Liberation Mono", monospace;color:#000;line-height:0;white-space:pre;letter-spacing:1.173px;-webkit-text-stroke:0.6px #000;transform:scale(1.0,1.24);transform-origin:0.00px 4px'>SIM_M7: 0x4140_0000 – 0x414F_FFFF</div>
<div style='left:92.00px;top:910px;font:normal 24px "Liberation Mono", monospace;color:#000;line-height:0;white-space:pre;transform:scale(1.0,1.15);transform-origin:1.00px 5px'>0</div>
<div style='left:254.70px;top:909px;font:normal 22px "Liberation Sans", sans-serif;color:#939393;line-height:0;white-space:pre;letter-spacing:1.548px;-webkit-text-stroke:0.3px #939393'>0x0000_0000</div>
<div style='left:425.00px;top:909px;font:normal 22px "Liberation Sans", sans-serif;color:#939393;line-height:0;white-space:pre;letter-spacing:1.469px;-webkit-text-stroke:0.3px #939393'>0x10_0000</div>
<div style='left:595.10px;top:909px;font:normal 22px "Liberation Sans", sans-serif;color:#939393;line-height:0;white-space:pre;letter-spacing:-0.063px;-webkit-text-stroke:0.3px #939393'>0x000F_FFFF</div>
<div style='left:852.80px;top:909px;font:normal 22px "Liberation Sans", sans-serif;color:#000;line-height:0;white-space:pre;transform:scale(0.84,1.0);transform-origin:1.00px 7px'>R</div>
<div style='left:867.00px;top:909px;font:normal 22px "Liberation Sans", sans-serif;color:#000;line-height:0;white-space:pre;transform:scale(0.94,1.0);transform-origin:0.00px 7px'>W</div>
<div style='left:1056.60px;top:909px;font:normal 22px "Liberation Sans", sans-serif;color:#000;line-height:0;white-space:pre;transform:scale(0.84,1.0);transform-origin:1.00px 7px'>R</div>
<div style='left:1070.80px;top:909px;font:normal 22px "Liberation Sans", sans-serif;color:#000;line-height:0;white-space:pre;transform:scale(0.94,1.0);transform-origin:0.00px 7px'>W</div>
<div style='left:52.50px;top:945px;font:bold 22px "Liberation Mono", monospace;color:#000;line-height:0;white-space:pre;letter-spacing:1.204px;-webkit-text-stroke:0.6px #000;transform:scale(1.0,1.24);transform-origin:1.00px 4px'>FlexSPI2: 0x6000_0000 – 0x7FFF_FFFF</div>
<div style='left:92.00px;top:978px;font:normal 24px "Liberation Mono", monospace;color:#000;line-height:0;white-space:pre;transform:scale(1.0,1.15);transform-origin:1.00px 5px'>0</div>
<div style='left:254.70px;top:977px;font:normal 22px "Liberation Sans", sans-serif;color:#939393;line-height:0;white-space:pre;letter-spacing:1.548px;-webkit-text-stroke:0.3px #939393'>0x0000_0000</div>
<div style='left:425.00px;top:977px;font:normal 22px "Liberation Sans", sans-serif;color:#939393;line-height:0;white-space:pre;letter-spacing:1.752px;-webkit-text-stroke:0.3px #939393'>0x1000</div>
<div style='left:595.10px;top:977px;font:normal 22px "Liberation Sans", sans-serif;color:#939393;line-height:0;white-space:pre;letter-spacing:0.518px;-webkit-text-stroke:0.3px #939393'>0x0000_0FFF</div>
<div style='left:852.40px;top:977px;font:normal 22px "Liberation Sans", sans-serif;color:#000;line-height:0;white-space:pre;letter-spacing:0.507px'>No Access</div>
<div style='left:1056.60px;top:977px;font:normal 22px "Liberation Sans", sans-serif;color:#000;line-height:0;white-space:pre;transform:scale(0.84,1.0);transform-origin:1.00px 7px'>R</div>
<div style='left:1070.80px;top:977px;font:normal 22px "Liberation Sans", sans-serif;color:#000;line-height:0;white-space:pre;transform:scale(0.94,1.0);transform-origin:0.00px 7px'>W</div>
<div style='left:53.50px;top:1013px;font:bold 22px "Liberation Mono", monospace;color:#000;line-height:0;white-space:pre;letter-spacing:1.171px;-webkit-text-stroke:0.6px #000;transform:scale(1.0,1.24);transform-origin:0.00px 4px'>SEMC: 0x8000_0000 – 0xDFFF_FFFF</div>
<div style='left:92.00px;top:1046px;font:normal 24px "Liberation Mono", monospace;color:#000;line-height:0;white-space:pre;transform:scale(1.0,1.15);transform-origin:1.00px 5px'>0</div>
<div style='left:254.70px;top:1045px;font:normal 22px "Liberation Sans", sans-serif;color:#939393;line-height:0;white-space:pre;letter-spacing:1.548px;-webkit-text-stroke:0.3px #939393'>0x0000_0000</div>
<div style='left:425.00px;top:1045px;font:normal 22px "Liberation Sans", sans-serif;color:#939393;line-height:0;white-space:pre;letter-spacing:1.513px;-webkit-text-stroke:0.3px #939393'>0x300_0000</div>
<div style='left:595.10px;top:1045px;font:normal 22px "Liberation Sans", sans-serif;color:#939393;line-height:0;white-space:pre;letter-spacing:-0.353px;-webkit-text-stroke:0.3px #939393'>0x02FF_FFFF</div>
<div style='left:852.80px;top:1045px;font:normal 22px "Liberation Sans", sans-serif;color:#000;line-height:0;white-space:pre;transform:scale(0.84,1.0);transform-origin:1.00px 7px'>R</div>
<div style='left:867.00px;top:1045px;font:normal 22px "Liberation Sans", sans-serif;color:#000;line-height:0;white-space:pre;transform:scale(0.94,1.0);transform-origin:0.00px 7px'>W</div>
<div style='left:1056.60px;top:1045px;font:normal 22px "Liberation Sans", sans-serif;color:#000;line-height:0;white-space:pre;transform:scale(0.84,1.0);transform-origin:1.00px 7px'>R</div>
<div style='left:1070.80px;top:1045px;font:normal 22px "Liberation Sans", sans-serif;color:#000;line-height:0;white-space:pre;transform:scale(0.94,1.0);transform-origin:0.00px 7px'>W</div>
<div style='left:92.00px;top:1080px;font:normal 24px "Liberation Mono", monospace;color:#000;line-height:0;white-space:pre;transform:scale(1.0,1.15);transform-origin:1.00px 5px'>1</div>
<div style='left:254.70px;top:1079px;font:normal 22px "Liberation Sans", sans-serif;color:#939393;line-height:0;white-space:pre;letter-spacing:1.548px;-webkit-text-stroke:0.3px #939393'>0x0300_0000</div>
<div style='left:425.00px;top:1079px;font:normal 22px "Liberation Sans", sans-serif;color:#939393;line-height:0;white-space:pre;letter-spacing:1.513px;-webkit-text-stroke:0.3px #939393'>0x100_0000</div>
<div style='left:595.10px;top:1079px;font:normal 22px "Liberation Sans", sans-serif;color:#939393;line-height:0;white-space:pre;letter-spacing:-0.353px;-webkit-text-stroke:0.3px #939393'>0x03FF_FFFF</div>
<div style='left:852.80px;top:1079px;font:normal 22px "Liberation Sans", sans-serif;color:#000;line-height:0;white-space:pre;transform:scale(0.84,1.0);transform-origin:1.00px 7px'>R</div>
<div style='left:867.00px;top:1079px;font:normal 22px "Liberation Sans", sans-serif;color:#000;line-height:0;white-space:pre;transform:scale(0.94,1.0);transform-origin:0.00px 7px'>W</div>
<div style='left:1056.60px;top:1079px;font:normal 22px "Liberation Sans", sans-serif;color:#000;line-height:0;white-space:pre;transform:scale(0.84,1.0);transform-origin:1.00px 7px'>R</div>
<div style='left:1070.80px;top:1079px;font:normal 22px "Liberation Sans", sans-serif;color:#000;line-height:0;white-space:pre;transform:scale(0.94,1.0);transform-origin:0.00px 7px'>W</div>
<div style='left:92.00px;top:1114px;font:normal 24px "Liberation Mono", monospace;color:#000;line-height:0;white-space:pre;transform:scale(1.0,1.15);transform-origin:1.00px 5px'>2</div>
<div style='left:254.70px;top:1113px;font:normal 22px "Liberation Sans", sans-serif;color:#939393;line-height:0;white-space:pre;letter-spacing:1.548px;-webkit-text-stroke:0.3px #939393'>0x0400_0000</div>
<div style='left:425.00px;top:1113px;font:normal 22px "Liberation Sans", sans-serif;color:#939393;line-height:0;white-space:pre;letter-spacing:1.513px;-webkit-text-stroke:0.3px #939393'>0x200_0000</div>
<div style='left:595.10px;top:1113px;font:normal 22px "Liberation Sans", sans-serif;color:#939393;line-height:0;white-space:pre;letter-spacing:-0.353px;-webkit-text-stroke:0.3px #939393'>0x05FF_FFFF</div>
<div style='left:852.40px;top:1113px;font:normal 22px "Liberation Sans", sans-serif;color:#000;line-height:0;white-space:pre;letter-spacing:0.507px'>No Access</div>
<div style='left:1056.60px;top:1113px;font:normal 22px "Liberation Sans", sans-serif;color:#000;line-height:0;white-space:pre;transform:scale(0.84,1.0);transform-origin:1.00px 7px'>R</div>
<div style='left:1070.80px;top:1113px;font:normal 22px "Liberation Sans", sans-serif;color:#000;line-height:0;white-space:pre;transform:scale(0.94,1.0);transform-origin:0.00px 7px'>W</div>
<div style='left:52.40px;top:31px;font:normal 22px "Liberation Sans", sans-serif;color:#7a7a7a;line-height:0;white-space:pre;letter-spacing:0.548px'>User Memory Regions</div>
<div style='left:342.30px;top:31px;font:normal 22px "Liberation Sans", sans-serif;color:#000;line-height:0;white-space:pre;letter-spacing:0.795px'>Security Access Configuration</div>
<div style='left:16.30px;top:79px;font:normal 22px "Liberation Sans", sans-serif;color:#000;line-height:0;white-space:pre;letter-spacing:-1.388px'>RDC</div>
<div style='left:80.80px;top:79px;font:normal 22px "Liberation Sans", sans-serif;color:#000;line-height:0;white-space:pre;letter-spacing:0.744px'>M7 Domain</div>
<div style='left:216.20px;top:79px;font:normal 22px "Liberation Sans", sans-serif;color:#000;line-height:0;white-space:pre;letter-spacing:0.782px'>M4 Domain</div>
<div style='left:352.00px;top:79px;font:normal 22px "Liberation Sans", sans-serif;color:#000;line-height:0;white-space:pre;letter-spacing:0.692px'>Miscellaneous</div>
<div style='left:20.70px;top:119px;font:normal 22px "Liberation Sans", sans-serif;color:#000;line-height:0;white-space:pre;letter-spacing:0.611px'>Masters</div>
<div style='left:119.70px;top:119px;font:normal 22px "Liberation Sans", sans-serif;color:#000;line-height:0;white-space:pre;letter-spacing:0.617px'>Memory Regions</div>
<div style='left:312.70px;top:119px;font:normal 22px "Liberation Sans", sans-serif;color:#000;line-height:0;white-space:pre;letter-spacing:0.432px'>Peripherals</div>
<div style='left:30.60px;top:179px;font:normal 22px "Liberation Sans", sans-serif;color:#222;line-height:0;white-space:pre;letter-spacing:0.740px'>Memory Regions Configuration</div>
<div style='left:29.60px;top:263px;font:normal 22px "Liberation Sans", sans-serif;color:#000;line-height:0;white-space:pre;letter-spacing:0.395px'>Index</div>
<div style='left:155.00px;top:263px;font:normal 22px "Liberation Sans", sans-serif;color:#000;line-height:0;white-space:pre;letter-spacing:-0.014px'>Enable</div>
<div style='left:258.60px;top:263px;font:normal 22px "Liberation Sans", sans-serif;color:#000;line-height:0;white-space:pre;letter-spacing:0.466px'>Address</div>
<div style='left:427.90px;top:263px;font:normal 22px "Liberation Sans", sans-serif;color:#000;line-height:0;white-space:pre;letter-spacing:0.013px'>Size</div>
<div style='left:598.40px;top:263px;font:normal 22px "Liberation Sans", sans-serif;color:#000;line-height:0;white-space:pre;letter-spacing:0.434px'>End Address</div>
<div style='left:772.80px;top:263px;font:normal 22px "Liberation Sans", sans-serif;color:#000;line-height:0;white-space:pre;letter-spacing:0.210px'>Lock</div>
<div style='left:856.00px;top:225px;font:normal 22px "Liberation Sans", sans-serif;color:#000;line-height:0;white-space:pre;letter-spacing:0.819px'>M7 Domain</div>
<div style='left:1060.20px;top:225px;font:normal 22px "Liberation Sans", sans-serif;color:#000;line-height:0;white-space:pre;letter-spacing:0.819px'>M4 Domain</div>
<div style='left:857.00px;top:263px;font:normal 22px "Liberation Sans", sans-serif;color:#000;line-height:0;white-space:pre;letter-spacing:0.639px'>Access Template</div>
<div style='left:1060.80px;top:263px;font:normal 22px "Liberation Sans", sans-serif;color:#000;line-height:0;white-space:pre;letter-spacing:0.639px'>Access Template</div>
</body></html>
